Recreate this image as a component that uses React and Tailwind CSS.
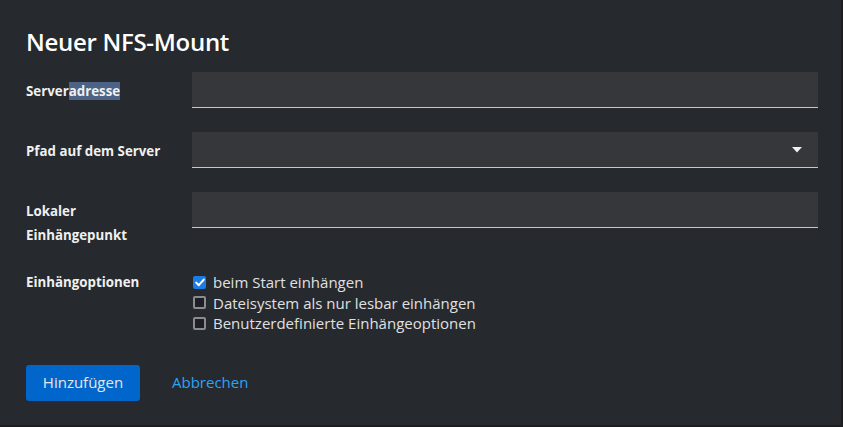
import React from 'react';

function Field({ label, children }) {
  return (
    <div className="flex h-[60px]">
      <div className="w-[166px] shrink-0 pt-[7px] text-[13.3px] font-bold leading-[24px] text-[#f0f0f0]">{label}</div>
      <div className="flex-1">{children}</div>
    </div>
  );
}

function Input({ select }) {
  return (
    <div className="relative h-[36px] w-full bg-[#36373b] border-b border-[#c7c7c7]">
      {select && (
        <svg className="absolute right-[16px] top-[15px]" width="10" height="6" viewBox="0 0 10 6">
          <path d="M0 0h10L5 5.5z" fill="#f0f0f0" />
        </svg>
      )}
    </div>
  );
}

function Check({ checked, label }) {
  return (
    <label className="flex items-center h-[20.5px] gap-[7px]">
      {checked ? (
        <span className="w-[13px] h-[13px] rounded-[2px] bg-[#1c7ce6] flex items-center justify-center">
          <svg width="10" height="9" viewBox="0 0 10 9">
            <path d="M1.2 4.6l2.6 2.6L8.8 1.6" stroke="#fff" strokeWidth="2" fill="none" strokeLinecap="round" strokeLinejoin="round" />
          </svg>
        </span>
      ) : (
        <span className="w-[13px] h-[13px] rounded-[2px] border-2 border-[#8a8d90] bg-[#1f1d26]" />
      )}
      <span className="text-[15px] text-[#e0e0e0]">{label}</span>
    </label>
  );
}

export default function App() {
  return (
    <div
      className="w-[843px] h-[427px] bg-[#26292e] border-r-2 border-b-2 border-[#1b1d21] pl-[26px] pr-[23px] pt-[25px]"
      style={{ fontFamily: '"Open Sans", "Liberation Sans", sans-serif' }}
    >
      <h1 className="text-[24px] font-semibold leading-[34px] text-white tracking-[-0.3px]">Neuer NFS-Mount</h1>
      <div className="mt-[13px]">
        <Field label={<span>Server<span className="bg-[#4c6385]">adresse</span></span>}>
          <Input />
        </Field>
        <Field label="Pfad auf dem Server">
          <Input select />
        </Field>
        <Field label={<span>Lokaler<br />Einhängepunkt</span>}>
          <Input />
        </Field>
        <div className="flex mt-[20px]">
          <div className="w-[166px] shrink-0 text-[13.3px] font-bold leading-[24px] text-[#f0f0f0] -mt-[2px]">Einhängoptionen</div>
          <div className="flex flex-col pl-[1px]">
            <Check checked label="beim Start einhängen" />
            <Check label="Dateisystem als nur lesbar einhängen" />
            <Check label="Benutzerdefinierte Einhängeoptionen" />
          </div>
        </div>
        <div className="flex items-center mt-[31px] gap-[32px]">
          <button className="h-[36px] w-[114px] rounded-[3px] bg-[#0066cc] text-[15px] text-[#e6e6e6]">Hinzufügen</button>
          <button className="text-[15px] text-[#2ba4f3]">Abbrechen</button>
        </div>
      </div>
    </div>
  );
}
